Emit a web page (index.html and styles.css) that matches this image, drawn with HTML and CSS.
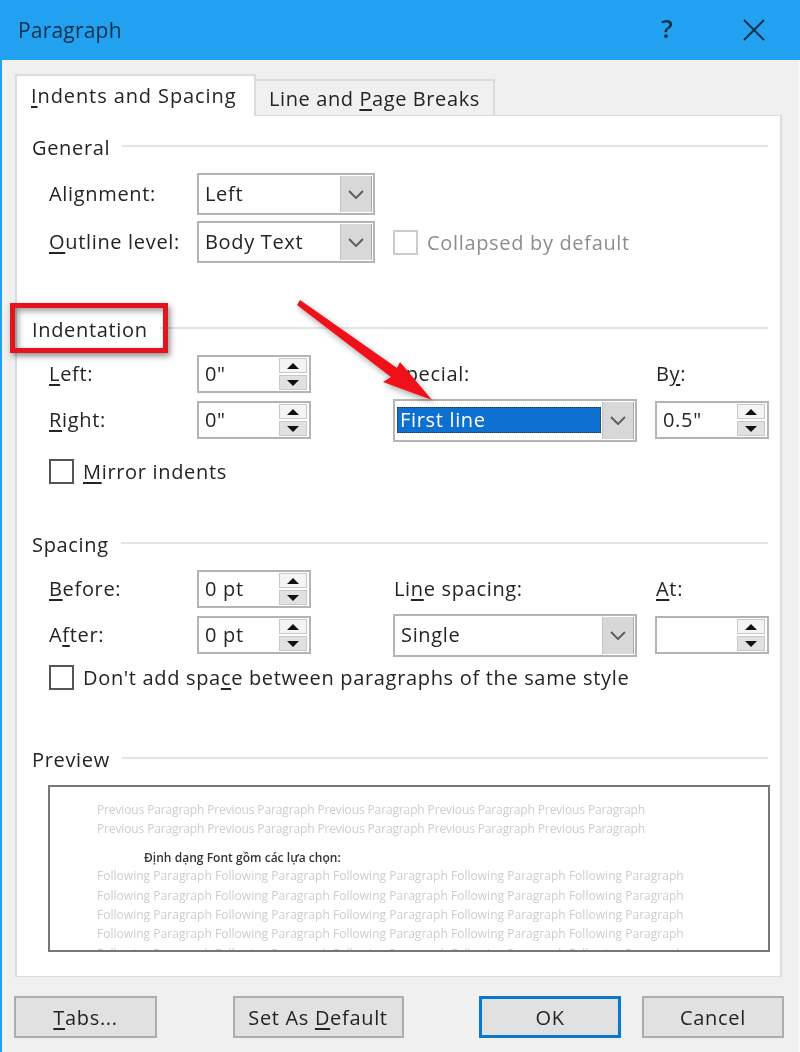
FILE: index.html
```html
<!DOCTYPE html>
<html lang="en">
<head>
<meta charset="utf-8">
<title>Paragraph</title>
<link rel="stylesheet" href="styles.css">
</head>
<body>
<div class="dialog">
  <header class="titlebar">
    <span class="title">Paragraph</span>
    <span class="help">?</span>
    <svg class="close" width="22" height="22" viewBox="0 0 22 22"><path d="M1 1 21 21M21 1 1 21"/></svg>
  </header>

  <nav class="tabs">
    <div class="tab active"><u>I</u>ndents and Spacing</div>
    <div class="tab">Line and <u>P</u>age Breaks</div>
  </nav>

  <main class="panel">
    <section class="general">
      <h2 class="heading"><span>General</span></h2>
      <div class="form form-tall">
        <label>Ali<u>g</u>nment:</label>
        <div class="combo combo-sm"><span class="value">Left</span><span class="arrow"><svg width="16" height="9" viewBox="0 0 16 9"><path d="M1 1 8 8 15 1"/></svg></span></div>
        <span></span><span></span>
        <label><u>O</u>utline level:</label>
        <div class="combo combo-sm"><span class="value">Body Text</span><span class="arrow"><svg width="16" height="9" viewBox="0 0 16 9"><path d="M1 1 8 8 15 1"/></svg></span></div>
        <div class="check-row disabled"><span class="box"></span><span>Collapsed by default</span></div>
      </div>
    </section>

    <section class="indentation">
      <h2 class="heading"><span>Indentation</span></h2>
      <div class="form">
        <label><u>L</u>eft:</label>
        <div class="spin"><span class="value">0"</span><span class="btns"><i class="up"></i><i class="down"></i></span></div>
        <label>Special:</label>
        <label>B<u>y</u>:</label>
        <label><u>R</u>ight:</label>
        <div class="spin"><span class="value">0"</span><span class="btns"><i class="up"></i><i class="down"></i></span></div>
        <div class="combo combo-lg"><span class="value"><b class="selected">First line</b></span><span class="arrow"><svg width="16" height="9" viewBox="0 0 16 9"><path d="M1 1 8 8 15 1"/></svg></span></div>
        <div class="spin"><span class="value">0.5"</span><span class="btns"><i class="up"></i><i class="down"></i></span></div>
      </div>
      <div class="check-row mirror"><span class="box"></span><span><u>M</u>irror indents</span></div>
    </section>

    <section class="spacing">
      <h2 class="heading"><span>Spacing</span></h2>
      <div class="form">
        <label><u>B</u>efore:</label>
        <div class="spin"><span class="value">0 pt</span><span class="btns"><i class="up"></i><i class="down"></i></span></div>
        <label>Li<u>n</u>e spacing:</label>
        <label><u>A</u>t:</label>
        <label>A<u>f</u>ter:</label>
        <div class="spin"><span class="value">0 pt</span><span class="btns"><i class="up"></i><i class="down"></i></span></div>
        <div class="combo combo-lg"><span class="value">Single</span><span class="arrow"><svg width="16" height="9" viewBox="0 0 16 9"><path d="M1 1 8 8 15 1"/></svg></span></div>
        <div class="spin"><span class="value"></span><span class="btns"><i class="up"></i><i class="down"></i></span></div>
      </div>
      <div class="check-row same-style"><span class="box"></span><span>Don't add spa<u>c</u>e between paragraphs of the same style</span></div>
    </section>

    <section class="preview">
      <h2 class="heading"><span>Preview</span></h2>
      <div class="preview-box">
        <p class="faded prev">Previous Paragraph Previous Paragraph Previous Paragraph Previous Paragraph Previous Paragraph</p>
        <p class="faded prev">Previous Paragraph Previous Paragraph Previous Paragraph Previous Paragraph Previous Paragraph</p>
        <p class="current">Định dạng Font gồm các lựa chọn:</p>
        <p class="faded">Following Paragraph Following Paragraph Following Paragraph Following Paragraph Following Paragraph</p>
        <p class="faded">Following Paragraph Following Paragraph Following Paragraph Following Paragraph Following Paragraph</p>
        <p class="faded">Following Paragraph Following Paragraph Following Paragraph Following Paragraph Following Paragraph</p>
        <p class="faded">Following Paragraph Following Paragraph Following Paragraph Following Paragraph Following Paragraph</p>
        <p class="faded">Following Paragraph Following Paragraph Following Paragraph Following Paragraph Following Paragraph</p>
      </div>
    </section>
  </main>

  <footer class="actions">
    <button class="btn btn-tabs"><u>T</u>abs...</button>
    <button class="btn btn-default">Set As <u>D</u>efault</button>
    <div class="actions-right">
      <button class="btn btn-ok">OK</button>
      <button class="btn btn-cancel">Cancel</button>
    </div>
  </footer>

  <div class="callout"></div>
  <svg class="pointer" width="160" height="120" viewBox="290 295 160 120">
    <path d="M297 305 300 300 397 368 400 362 432 400 383 382 391 377Z"/>
  </svg>
</div>
</body>
</html>
```

FILE: styles.css
```css
* { box-sizing: border-box; }

html, body { margin: 0; padding: 0; }

body {
  width: 800px;
  height: 1052px;
  overflow: hidden;
  font-family: "Open Sans", "Noto Sans", sans-serif;
  font-size: 20px;
  font-weight: 500;
  letter-spacing: 0.67px;
  color: #242424;
}

u { text-underline-offset: 3px; text-decoration-thickness: 2px; }

.dialog {
  position: relative;
  width: 800px;
  height: 1052px;
  background: #f0f0f0;
  border-left: 2px solid #23a0f0;
  border-right: 2px solid #f4f8fb;
  filter: blur(0.45px);
}

.titlebar {
  display: flex;
  align-items: center;
  height: 60px;
  margin-right: -2px;
  padding-left: 16px;
  background: #23a1f1;
  color: #10304a;
  letter-spacing: 0.2px;
}
.title { font-size: 21px; flex: 1; }
.help { font-size: 26px; font-weight: 600; margin: 0 70px 5px 0; }
.close { margin-right: 35px; }
.close path { fill: none; stroke: #10304a; stroke-width: 2; }

.tabs {
  display: flex;
  align-items: flex-end;
  height: 55px;
  padding: 15px 0 0 13px;
}
.tab {
  position: relative;
  width: 239px;
  height: 36px;
  padding: 4px 0 0 13px;
  background: #f0f0f0;
  border: 2px solid #dcdcdc;
  border-bottom: 0;
  border-left: 0;
  letter-spacing: 0.6px;
}
.tab.active {
  z-index: 1;
  width: 241px;
  height: 42px;
  margin-bottom: -1px;
  padding: 6px 0 0 14px;
  background: #fff;
  border-left: 2px solid #dcdcdc;
  letter-spacing: 0.9px;
}

.panel {
  width: 767px;
  height: 862px;
  margin-left: 13px;
  padding: 19px 12px 0 15px;
  background: #fff;
  border: 2px solid #dcdcdc;
  border-top-width: 1px;
  border-bottom-width: 1px;
}

.heading {
  display: flex;
  align-items: center;
  gap: 12px;
  height: 24px;
  margin: 0 0 14px;
  font: inherit;
}
.heading::after {
  content: "";
  flex: 1;
  height: 2px;
  margin-top: -2px;
  background: #e4e4e4;
}

.form {
  display: grid;
  grid-template-columns: 149px 196px 262px 113px;
  grid-auto-rows: 38px;
  row-gap: 8px;
  align-items: center;
  margin-left: 17px;
}
.form-tall { grid-auto-rows: 42px; row-gap: 6px; }
.form label { padding-bottom: 2px; }

.indentation { margin-top: 54px; }
.spacing { margin-top: 48px; }
.preview { margin-top: 57px; }

.combo, .spin {
  display: flex;
  background: #fff;
  border: 2px solid #b4b4b4;
}
.combo { justify-self: start; }
.combo-sm { width: 178px; height: 42px; }
.combo-lg { width: 244px; height: 43px; margin-left: -1px; }
.spin { width: 114px; height: 38px; margin-left: -1px; }
.form-tall .combo { margin-left: -1px; }

.value {
  flex: 1;
  display: flex;
  align-items: center;
  padding: 0 0 2px 6px;
  min-width: 0;
}
.arrow {
  display: flex;
  align-items: center;
  justify-content: center;
  width: 32px;
  margin: 1px 1px 1px 0;
  background: #d8d8d8;
  border-left: 1px solid #c4c4c4;
  border-right: 1px solid #adadad;
}
.arrow svg path { fill: none; stroke: #5f5f5f; stroke-width: 2; }

.selected {
  display: block;
  width: 204px;
  height: 26px;
  margin: 2px 0 0 -4px;
  padding-left: 3px;
  font-weight: 500;
  line-height: 26px;
  color: #fff;
  background: #0d6fd0;
  outline: 1px dotted #333;
  outline-offset: -1px;
}

.btns {
  display: flex;
  flex-direction: column;
  justify-content: center;
  gap: 2px;
  width: 28px;
  margin-right: 2px;
}
.btns i {
  display: flex;
  align-items: center;
  justify-content: center;
  height: 15px;
  border: 1px solid #c8c8c8;
}
.btns i::before {
  content: "";
  border-left: 6px solid transparent;
  border-right: 6px solid transparent;
}
.btns .up { background: #f4f4f4; }
.btns .down { background: #e1e1e1; }
.btns .up::before { border-bottom: 6px solid #111; }
.btns .down::before { border-top: 6px solid #111; }

.check-row {
  display: flex;
  align-items: center;
  gap: 9px;
  height: 25px;
}
.box {
  flex: none;
  width: 25px;
  height: 25px;
  background: #fff;
  border: 2px solid #555;
}
.mirror { margin: 20px 0 0 17px; }
.same-style { margin: 11px 0 0 17px; }
.disabled { grid-column: 3 / 5; color: #8d8d8d; margin-left: -1px; }
.disabled .box { border-color: #ccc; }

.preview-box {
  width: 722px;
  height: 167px;
  margin: 13px 0 0 16px;
  padding: 13px 0 0 47px;
  overflow: hidden;
  background: #fff;
  border: 2px solid #777;
  font-size: 12px;
  font-weight: 400;
  letter-spacing: 0.03px;
  line-height: 19.4px;
  white-space: nowrap;
}
.preview-box p { margin: 0; }
.faded { color: #cdcdcd; }
.prev { letter-spacing: -0.13px; }
.current { margin: 9px 0 -1px 47px !important; color: #333; font-weight: 600; }

.actions {
  display: flex;
  justify-content: space-between;
  width: 770px;
  margin: 19px 0 0 12px;
}
.actions-right { display: flex; gap: 21px; }

.btn {
  height: 42px;
  padding: 0;
  font: inherit;
  letter-spacing: inherit;
  color: #242424;
  background: #e1e1e1;
  border: 2px solid #adadad;
}
.btn-tabs { width: 143px; }
.btn-default { width: 171px; }
.btn-ok { width: 142px; border: 3px solid #0b78d0; }
.btn-cancel { width: 142px; }

.callout {
  position: absolute;
  left: 8px;
  top: 303px;
  width: 158px;
  height: 50px;
  border: 5px solid #e5141c;
  box-shadow: 2px 3px 6px rgba(0, 0, 0, .45), inset 3px 3px 6px rgba(0, 0, 0, .4);
}

.pointer {
  position: absolute;
  left: 288px;
  top: 295px;
  overflow: visible;
  filter: drop-shadow(2px 3px 3px rgba(0, 0, 0, .35));
}
.pointer path { fill: #f0101a; }
```
